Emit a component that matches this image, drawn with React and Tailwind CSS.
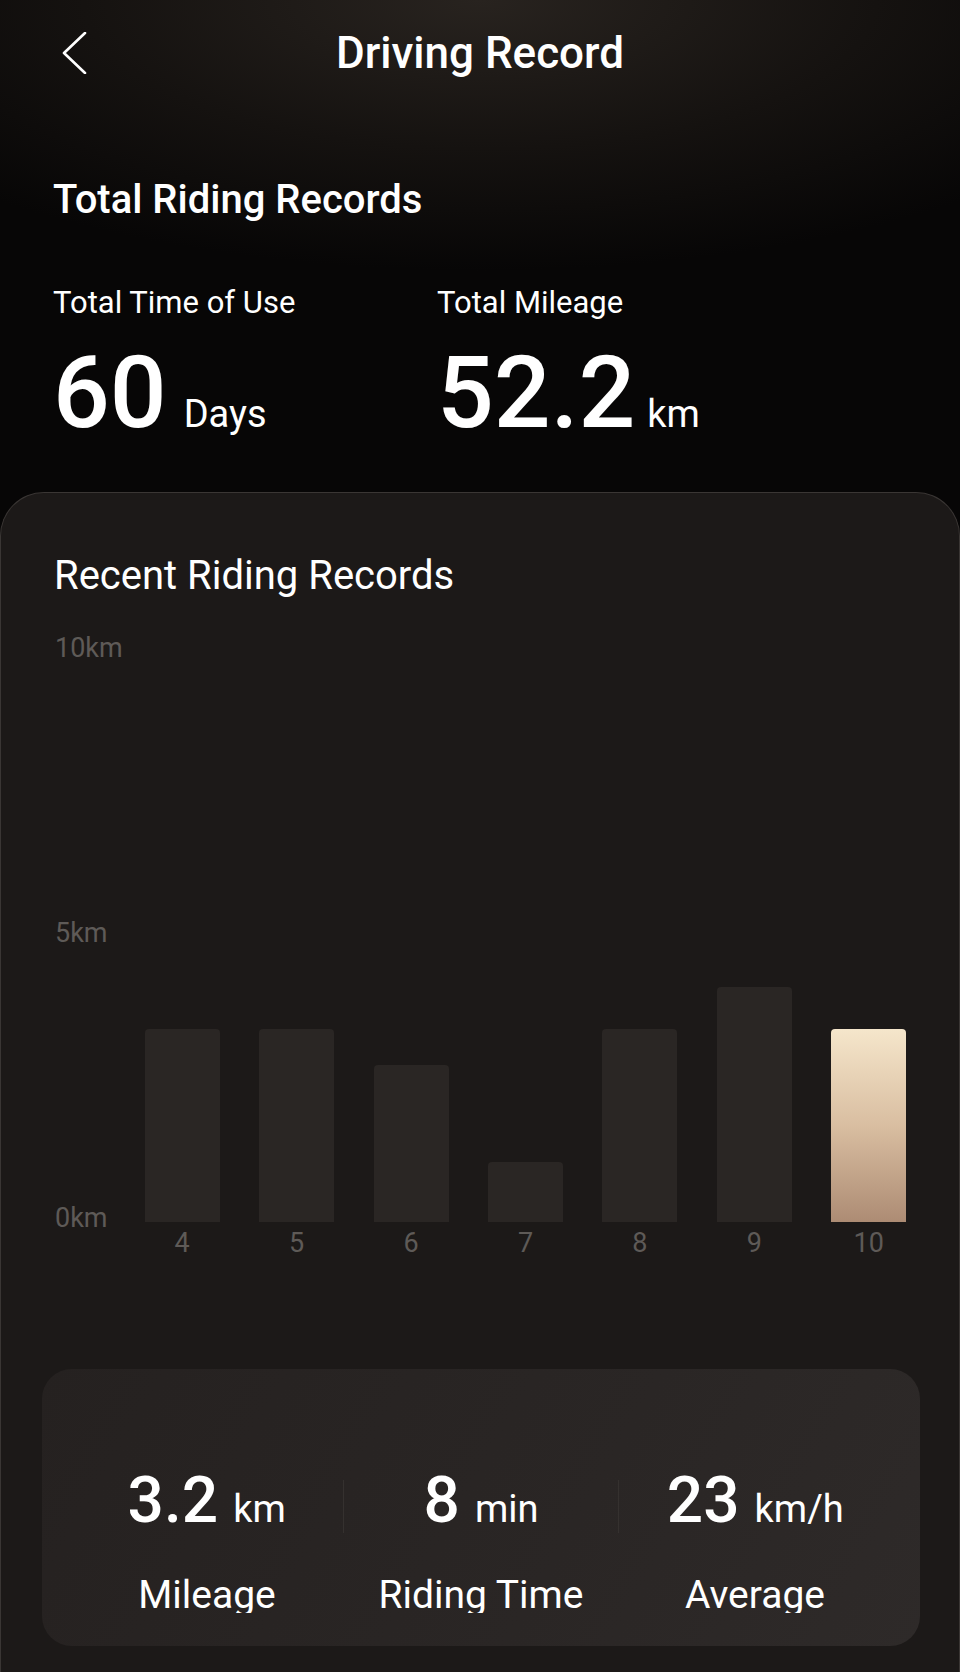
import React from "react";

const bars = [
  { day: "4", h: 193 },
  { day: "5", h: 193 },
  { day: "6", h: 157 },
  { day: "7", h: 60 },
  { day: "8", h: 193 },
  { day: "9", h: 235 },
  { day: "10", h: 193, active: true },
];

const stats = [
  { value: "3.2", unit: "km", label: "Mileage" },
  { value: "8", unit: "min", label: "Riding Time" },
  { value: "23", unit: "km/h", label: "Average" },
];

const BackIcon = () => (
  <svg width="26" height="42" viewBox="0 0 26 42" fill="none">
    <polyline
      points="23,1 2,21 23,41"
      stroke="white"
      strokeWidth="2.6"
      strokeLinecap="round"
      strokeLinejoin="round"
    />
  </svg>
);

const StatCell = ({ value, unit }) => (
  <div className="flex items-baseline justify-center leading-none">
    <span className="text-[64px] font-medium text-white">{value}</span>
    <span className="ml-[15px] text-[38px] text-white">{unit}</span>
  </div>
);

export default function App() {
  return (
    <div
      className="min-h-[1672px] w-full bg-[#070606] text-white"
      style={{ fontFamily: "Roboto, 'Noto Sans', sans-serif" }}
    >
      {/* top section */}
      <div className="bg-[radial-gradient(ellipse_75%_55%_at_50%_0%,#28231f_0%,#151210_55%,#070606_100%)] pb-[49px]">
        <div className="grid grid-cols-[1fr_auto_1fr] items-center pt-[31px]">
          <div className="pl-[62px] flex items-center">
            <BackIcon />
          </div>
          <h1 className="text-[44px] leading-none font-medium">Driving Record</h1>
          <div />
        </div>

        <div className="pl-[53px]">
          <h2 className="mt-[105px] text-[40px] leading-none font-medium">Total Riding Records</h2>

          <div className="mt-[67px] flex">
            <div className="w-[384px]">
              <p className="text-[31px] leading-none">Total Time of Use</p>
              <div className="mt-[25px] flex items-baseline leading-none">
                <span className="text-[100px] font-medium">60</span>
                <span className="ml-[17px] text-[38px]">Days</span>
              </div>
            </div>
            <div>
              <p className="text-[31px] leading-none">Total Mileage</p>
              <div className="mt-[25px] flex items-baseline leading-none">
                <span className="text-[100px] font-medium">52.2</span>
                <span className="ml-[12px] text-[38px]">km</span>
              </div>
            </div>
          </div>
        </div>
      </div>

      {/* recent card */}
      <div className="rounded-t-[44px] border border-b-0 border-[#3a3634] bg-[#1c1918] pt-[63px] pb-[26px]">
        <h2 className="pl-[53px] text-[40px] leading-none">Recent Riding Records</h2>

        <div className="mt-[39px] flex pl-[54px] pr-[33px]">
          <div className="flex h-[597px] w-[70px] flex-col justify-between text-[27px] leading-none text-[#5e5a57]">
            <span>10km</span>
            <span>5km</span>
            <span>0km</span>
          </div>
          <div className="grid flex-1 grid-cols-7">
            {bars.map((b) => (
              <div key={b.day} className="flex flex-col items-center">
                <div className="flex h-[587px] items-end">
                  <div
                    className={
                      b.active
                        ? "w-[75px] rounded-t-[4px] bg-gradient-to-b from-[#f5e6cb] via-[#d9bea1] to-[#ad8c74]"
                        : "w-[75px] rounded-t-[4px] bg-[#2a2624]"
                    }
                    style={{ height: b.h }}
                  />
                </div>
                <span className="mt-[8px] text-[27px] leading-none text-[#5e5a57]">{b.day}</span>
              </div>
            ))}
          </div>
        </div>

        <div className="mt-[112px] ml-[41px] mr-[39px] rounded-[30px] bg-[linear-gradient(120deg,#252120_0%,#2a2625_60%,#2e2a29_100%)] px-[28px] pt-[100px] pb-[33px]">
          <div className="grid grid-cols-[1fr_1px_1fr_1px_1fr]">
            <StatCell {...stats[0]} />
            <div className="h-[53px] self-end bg-[#35312f]" />
            <StatCell {...stats[1]} />
            <div className="h-[53px] self-end bg-[#35312f]" />
            <StatCell {...stats[2]} />
          </div>
          <div className="mt-[44px] grid grid-cols-3">
            {stats.map((s) => (
              <div key={s.label} className="h-[36px] overflow-hidden text-center text-[39px] leading-[46px]">
                <span className="relative top-[-5px]">{s.label}</span>
              </div>
            ))}
          </div>
        </div>
      </div>
    </div>
  );
}
